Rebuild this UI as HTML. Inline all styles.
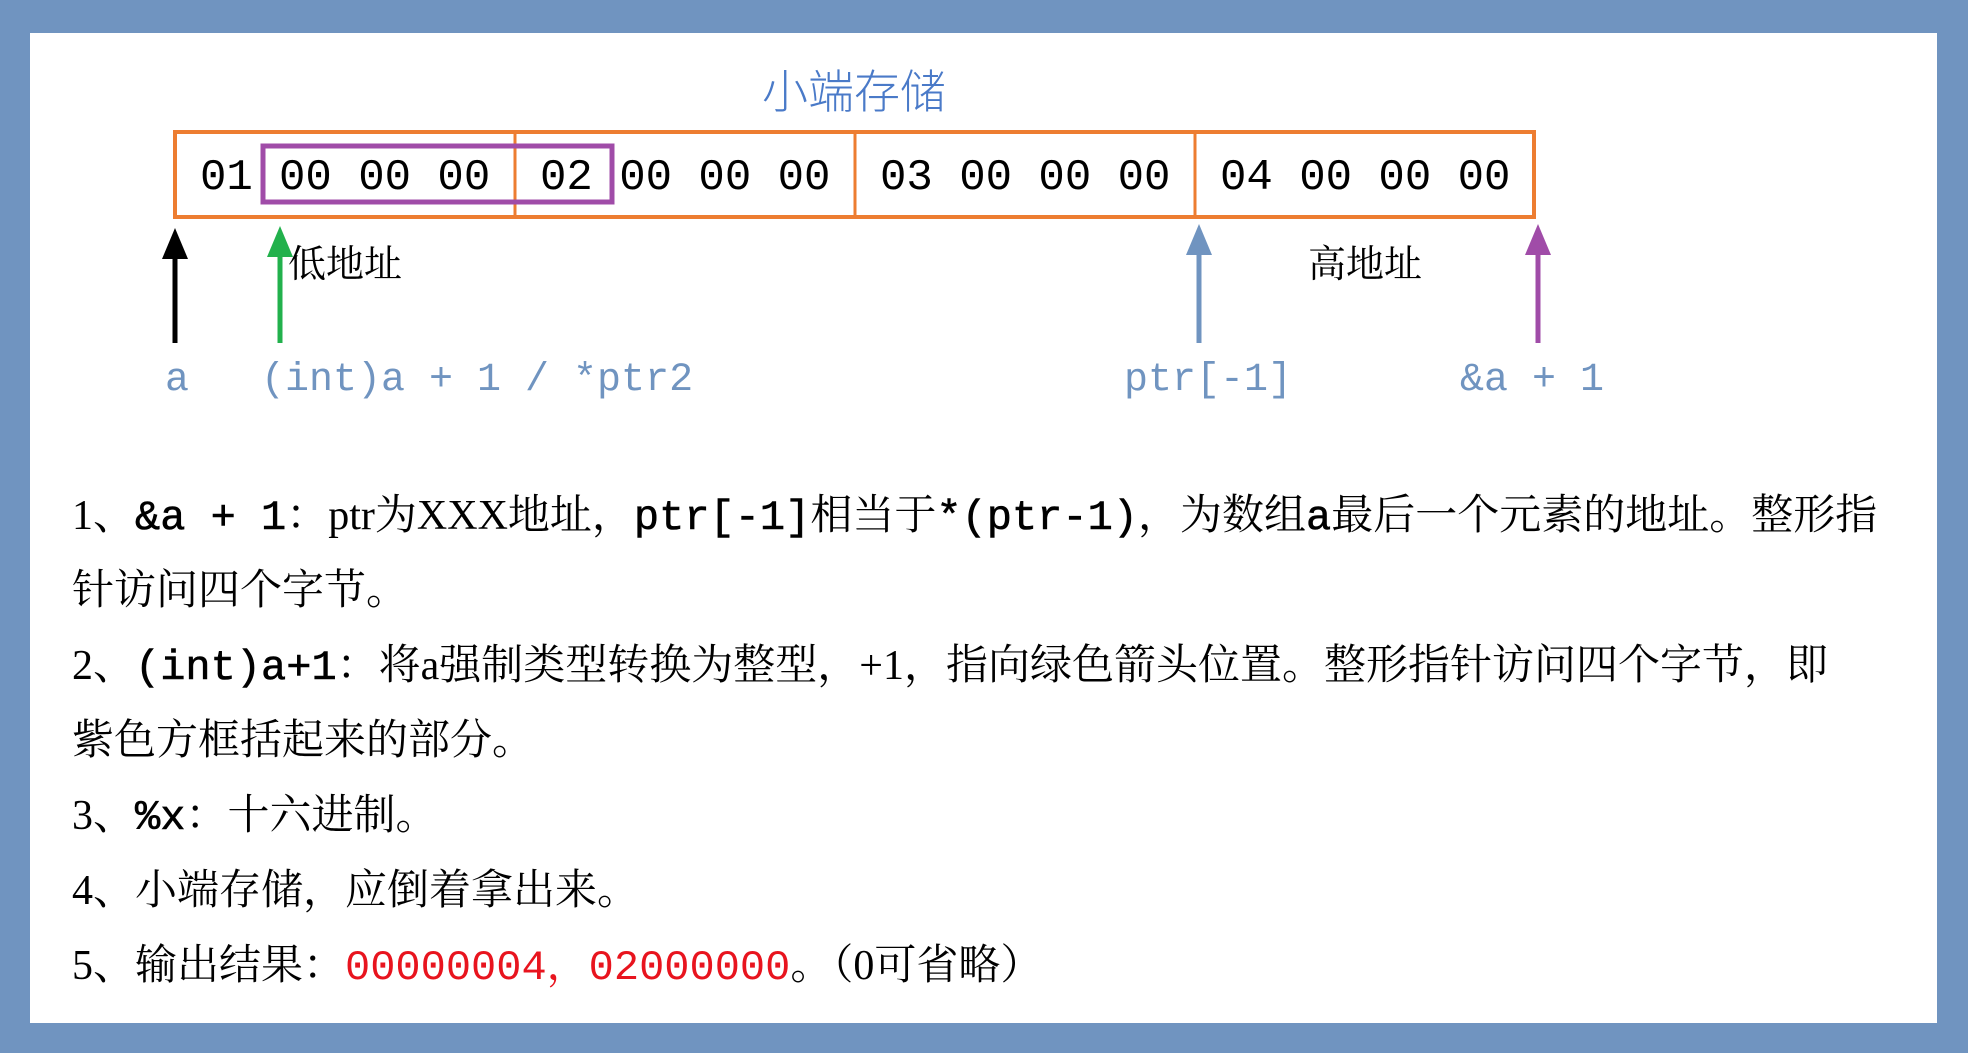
<!DOCTYPE html>
<html><head><meta charset="utf-8"><style>
html,body{margin:0;padding:0}
body{width:1968px;height:1053px;background:#7094c0;position:relative;overflow:hidden}
#p{position:absolute;left:30px;top:33px;width:1907px;height:990px;background:#fff}
.a{position:absolute;white-space:nowrap}
.serif{font-family:"Liberation Serif","Noto Serif CJK SC",serif}
.hex{font-family:"Liberation Mono",monospace;font-size:44px;color:#000;top:148px;line-height:60px}
.lbl{font-family:"Liberation Mono",monospace;font-size:40px;color:#7094c0;top:354px;line-height:50px}
.ln{left:72px;font-size:42px;line-height:75px;color:#000;font-family:"Liberation Serif","Noto Serif CJK SC",serif}
.c{font-family:"Liberation Mono",monospace;font-size:42px;-webkit-text-stroke:0.6px #000}
.r{color:#e8141e}
</style></head><body>
<div id="p"></div>
<div class="a" style="left:762px;top:61px;font-size:46px;color:#4a7ac8;font-family:'Noto Sans CJK SC',sans-serif;font-weight:300;line-height:56px">小端存储</div>
<svg class="a" style="left:0;top:0" width="1968" height="450">
<rect x="175" y="132" width="1359" height="85" fill="none" stroke="#ed7d31" stroke-width="4"/>
<line x1="515" y1="132" x2="515" y2="217" stroke="#ed7d31" stroke-width="3"/>
<line x1="855" y1="132" x2="855" y2="217" stroke="#ed7d31" stroke-width="3"/>
<line x1="1195" y1="132" x2="1195" y2="217" stroke="#ed7d31" stroke-width="3"/>
<rect x="263" y="146" width="349" height="56" fill="none" stroke="#a04ca8" stroke-width="5"/>
<g stroke-width="5">
<line x1="175" y1="250" x2="175" y2="343" stroke="#000"/>
<polygon points="175,228 162,259 188,259" fill="#000"/>
<line x1="280" y1="250" x2="280" y2="343" stroke="#22b14c"/>
<polygon points="280,226 267,257 293,257" fill="#22b14c"/>
<line x1="1199" y1="250" x2="1199" y2="343" stroke="#7094c0"/>
<polygon points="1199,224 1186,255 1212,255" fill="#7094c0"/>
<line x1="1538" y1="250" x2="1538" y2="343" stroke="#a04ca8"/>
<polygon points="1538,224 1525,255 1551,255" fill="#a04ca8"/>
</g>
</svg>
<div class="a hex" style="left:200px">01</div>
<div class="a hex" style="left:279px">00 00 00</div>
<div class="a hex" style="left:540px">02 00 00 00</div>
<div class="a hex" style="left:880px">03 00 00 00</div>
<div class="a hex" style="left:1220px">04 00 00 00</div>
<div class="a serif" style="left:288px;top:240px;font-size:38px;line-height:50px">低地址</div>
<div class="a serif" style="left:1308px;top:240px;font-size:38px;line-height:50px">高地址</div>
<div class="a lbl" style="left:165px;top:356px">a</div>
<div class="a lbl" style="left:261px;top:356px">(int)a + 1 / *ptr2</div>
<div class="a lbl" style="left:1124px;top:356px">ptr[-1]</div>
<div class="a lbl" style="left:1460px;top:356px">&amp;a + 1</div>
<div class="a ln" style="top:479px">1、<span class="c">&amp;a + 1</span>：ptr为XXX地址，<span class="c">ptr[-1]</span>相当于<span class="c">*(ptr-1)</span>，为数组<span class="c">a</span>最后一个元素的地址。整形指</div>
<div class="a ln" style="top:554px">针访问四个字节。</div>
<div class="a ln" style="top:629px">2、<span class="c">(int)a+1</span>：将a强制类型转换为整型，+1，指向绿色箭头位置。整形指针访问四个字节，即</div>
<div class="a ln" style="top:704px">紫色方框括起来的部分。</div>
<div class="a ln" style="top:779px">3、<span class="c">%x</span>：十六进制。</div>
<div class="a ln" style="top:854px">4、小端存储，应倒着拿出来。</div>
<div class="a ln" style="top:929px">5、输出结果：<span class="c r" style="-webkit-text-stroke:0">00000004</span><span class="r">，</span><span class="c r" style="-webkit-text-stroke:0">02000000</span>。（0可省略）</div>
</body></html>
